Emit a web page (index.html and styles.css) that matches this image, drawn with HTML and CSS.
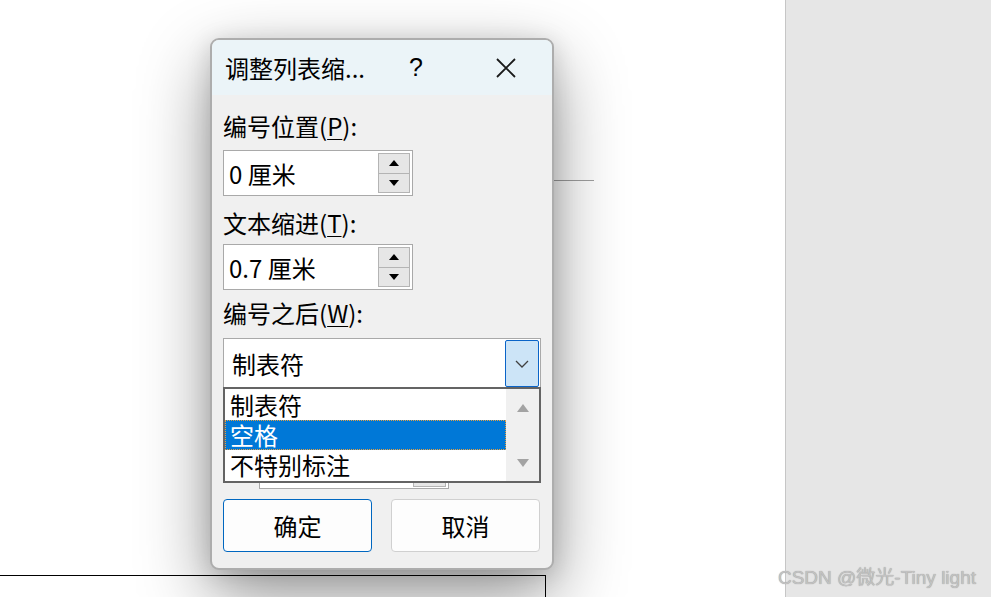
FILE: index.html
```html
<!DOCTYPE html>
<html lang="zh-CN">
<head>
<meta charset="utf-8">
<title>调整列表缩进</title>
<link rel="stylesheet" href="styles.css">
</head>
<body>
<div class="app">
  <div class="doc">
    <div class="rule"></div>
    <div class="table-box"></div>
  </div>
  <div class="side"></div>
  <div class="watermark">CSDN @微光-Tiny light</div>

  <div class="dialog">
    <div class="titlebar">
      <span class="title">调整列表缩...</span>
      <span class="help">?</span>
      <span class="close">
        <svg width="20" height="20" viewBox="0 0 20 20"><path d="M1 1 L19 19 M19 1 L1 19" stroke="#1a1a1a" stroke-width="1.8" fill="none"/></svg>
      </span>
    </div>
    <div class="body">
      <div class="label l1">编号位置(<u>P</u>):</div>
      <div class="spin s1">
        <span class="spin-text">0 厘米</span>
        <span class="spin-btns">
          <span class="sb"><span class="tri-up"></span></span>
          <span class="sb"><span class="tri-down"></span></span>
        </span>
      </div>
      <div class="label l2">文本缩进(<u>T</u>):</div>
      <div class="spin s2">
        <span class="spin-text">0.7 厘米</span>
        <span class="spin-btns">
          <span class="sb"><span class="tri-up"></span></span>
          <span class="sb"><span class="tri-down"></span></span>
        </span>
      </div>
      <div class="label l3">编号之后(<u>W</u>):</div>
      <div class="combo">
        <span class="combo-text">制表符</span>
        <span class="combo-btn">
          <svg width="14" height="8" viewBox="0 0 14 8"><path d="M1 1 L7 7 L13 1" stroke="#404040" stroke-width="1.3" fill="none"/></svg>
        </span>
      </div>
      <div class="spin hidden-spin">
        <span class="spin-text"></span>
        <span class="spin-btns small">
          <span class="sb"></span>
          <span class="sb"></span>
        </span>
      </div>
      <div class="buttons">
        <div class="btn primary">确定</div>
        <div class="btn">取消</div>
      </div>

      <div class="list">
        <div class="items">
          <div class="item">制表符</div>
          <div class="item selected">空格</div>
          <div class="item">不特别标注</div>
        </div>
        <div class="scroll">
          <span class="arr-up"></span>
          <span class="arr-down"></span>
        </div>
      </div>
    </div>
  </div>
</div>
</body>
</html>
```

FILE: styles.css
```css
html, body {
  margin: 0;
  padding: 0;
}
body {
  width: 991px;
  height: 597px;
  overflow: hidden;
  background: #ffffff;
  font-family: "Noto Sans CJK SC", "Noto Sans", sans-serif;
  color: #000;
}
.app {
  position: relative;
  display: flex;
  width: 991px;
  height: 597px;
  overflow: hidden;
}
.doc {
  width: 785px;
  flex: none;
  display: flex;
  flex-direction: column;
  background: #fff;
}
.rule {
  margin-top: 180px;
  margin-left: 420px;
  width: 174px;
  height: 1px;
  background: #a0a0a0;
}
.table-box {
  margin-top: 395px;
  width: 545px;
  height: 60px;
  border-top: 1px solid #000;
  border-right: 1px solid #000;
}
.side {
  flex: 1;
  background: #e6e6e6;
  border-left: 1px solid #c6c6c6;
}
.watermark {
  position: absolute;
  right: 15px;
  bottom: 7px;
  font-family: "Liberation Sans", "Noto Sans CJK SC", sans-serif;
  font-size: 19px;
  line-height: 24px;
  color: #c2c2c2;
  text-shadow: 0 0 1px #8c8c8c;
}

/* dialog */
.dialog {
  position: absolute;
  left: 210px;
  top: 38px;
  width: 344px;
  height: 532px;
  box-sizing: border-box;
  border: 2px solid #adadad;
  border-radius: 9px;
  background: #f0f0f0;
  box-shadow: 0 26px 70px rgba(0,0,0,0.42), 0 4px 24px rgba(0,0,0,0.14);
  overflow: hidden;
}
.titlebar {
  height: 55px;
  background: #ebf4f8;
  display: flex;
  align-items: center;
  padding-left: 13px;
  font-size: 24px;
}
.title {
  width: 184px;
  white-space: nowrap;
}
.help {
  width: 87px;
  font-family: "Liberation Sans", sans-serif;
  font-size: 25px;
}
.close {
  display: flex;
  align-items: center;
}
.body {
  position: relative;
  display: flex;
  flex-direction: column;
  padding: 0 11px;
}
.label {
  font-size: 24px;
  line-height: 30px;
  height: 30px;
  white-space: nowrap;
}
.label u {
  text-decoration-thickness: 1px;
  text-underline-offset: 3px;
}
.l1 { margin-top: 16px; }
.l2 { margin-top: 12px; }
.l3 { margin-top: 8px; }

.spin {
  box-sizing: border-box;
  width: 190px;
  height: 46px;
  background: #fff;
  border: 1px solid #a9a9a9;
  display: flex;
  align-items: center;
  justify-content: space-between;
  padding: 2px 2px 2px 5px;
}
.s1 { margin-top: 9px; }
.s2 { margin-top: 6px; }
.spin-text {
  font-size: 24px;
  white-space: nowrap;
}
.spin-btns {
  display: flex;
  flex-direction: column;
  width: 32px;
  height: 40px;
}
.sb {
  flex: 1;
  box-sizing: border-box;
  background: #e6e6e6;
  border: 1px solid #b4b4b4;
  display: flex;
  align-items: center;
  justify-content: center;
}
.sb + .sb { border-top: none; }
.tri-up, .tri-down {
  width: 0;
  height: 0;
  border-left: 5px solid transparent;
  border-right: 5px solid transparent;
}
.tri-up { border-bottom: 6px solid #000; }
.tri-down { border-top: 6px solid #000; }

.combo {
  margin-top: 10px;
  box-sizing: border-box;
  width: 318px;
  height: 50px;
  background: #fff;
  border: 1px solid #a9a9a9;
  display: flex;
  align-items: center;
  justify-content: space-between;
  padding: 1px 1px 0 8px;
}
.combo-text {
  font-size: 24px;
}
.combo-btn {
  box-sizing: border-box;
  width: 34px;
  height: 47px;
  align-self: flex-start;
  background: #cce4f7;
  border: 1px solid #0a64c8;
  border-radius: 2px;
  display: flex;
  align-items: center;
  justify-content: center;
}

.hidden-spin {
  margin-top: 56px;
  margin-left: 36px;
  width: 190px;
  height: 45px;
  padding: 2px;
}
.spin-btns.small {
  width: 33px;
  height: 40px;
}

.buttons {
  margin-top: 10px;
  display: flex;
  gap: 19px;
}
.btn {
  box-sizing: border-box;
  width: 149px;
  height: 53px;
  border: 1px solid #d0d0d0;
  border-radius: 4px;
  background: #fdfdfd;
  display: flex;
  align-items: center;
  justify-content: center;
  font-size: 24px;
}
.btn.primary {
  border-color: #0067c0;
}

/* dropdown list overlay */
.list {
  position: absolute;
  left: 11px;
  top: 292px;
  width: 318px;
  height: 96px;
  box-sizing: border-box;
  border: 2px solid #646464;
  background: #fff;
  display: flex;
}
.items {
  flex: 1;
  display: flex;
  flex-direction: column;
  padding-top: 1px;
}
.item {
  box-sizing: border-box;
  height: 30px;
  line-height: 28px;
  padding-left: 4px;
  font-size: 24px;
  border: 1px solid transparent;
  white-space: nowrap;
}
.item.selected {
  background: #0078d7;
  color: #fff;
  border: 1px dotted #e8a040;
}
.scroll {
  width: 33px;
  background: #f0f0f0;
  display: flex;
  flex-direction: column;
  align-items: center;
  justify-content: space-between;
  padding: 15px 0 14px;
  box-sizing: border-box;
}
.arr-up, .arr-down {
  width: 0;
  height: 0;
  border-left: 6px solid transparent;
  border-right: 6px solid transparent;
}
.arr-up { border-bottom: 8px solid #a3a3a3; }
.arr-down { border-top: 8px solid #a3a3a3; }
```
